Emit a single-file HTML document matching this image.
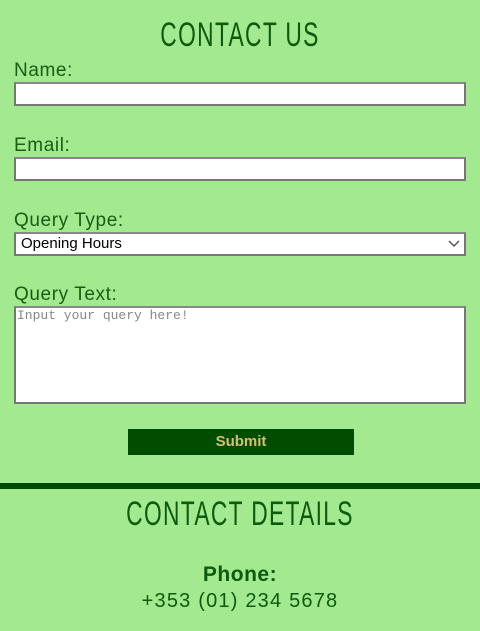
<!DOCTYPE html>
<html><head><style>
body{margin:0;width:480px;height:631px;background:#a3e98f;font-family:"Liberation Sans",sans-serif;color:#175e12;position:relative;overflow:hidden}
.a{position:absolute}
h{position:absolute;left:0;width:480px;text-align:center;font-size:34px;line-height:35px;transform:scaleX(0.67);letter-spacing:2px;color:#0d5a0d}
.l{position:absolute;left:14px;font-size:19px;line-height:20px;letter-spacing:0.6px}
.i{position:absolute;left:14px;width:448px;height:20px;background:#fff;border:2px solid #777;border-top-color:#888}
</style></head><body>
<h style="top:18px">CONTACT US</h>
<div class="l" style="top:61px">Name:</div>
<div class="i" style="top:82px"></div>
<div class="l" style="top:136px">Email:</div>
<div class="i" style="top:157px"></div>
<div class="l" style="top:211px">Query Type:</div>
<div class="i" style="top:232px;font-size:15px;color:#000;line-height:20px;letter-spacing:0"><span style="margin-left:5px">Opening Hours</span>
<svg style="position:absolute;right:4px;top:6px" width="12" height="8"><path d="M1 1 L6 6 L11 1" fill="none" stroke="#555" stroke-width="1.5"/></svg></div>
<div class="l" style="top:285px">Query Text:</div>
<div class="i" style="top:306px;height:94px;font-family:'Liberation Mono',monospace;font-size:13px;color:#888;line-height:16px"><span style="margin-left:1px">Input your query here!</span></div>
<div class="a" style="left:128px;top:429px;width:226px;height:26px;background:#004d00;color:#d4c070;font-size:15px;font-weight:bold;text-align:center;line-height:26px">Submit</div>
<div class="a" style="left:0;top:483px;width:480px;height:6px;background:#004d00"></div>
<h style="top:497px">CONTACT DETAILS</h>
<div class="a" style="left:0;width:480px;top:563px;text-align:center;font-size:21px;font-weight:bold;color:#0d5a0d;letter-spacing:0.5px">Phone:</div>
<div class="a" style="left:0;width:480px;top:590px;text-align:center;font-size:20px;color:#0d5a0d;letter-spacing:1.2px">+353 (01) 234 5678</div>
</body></html>
